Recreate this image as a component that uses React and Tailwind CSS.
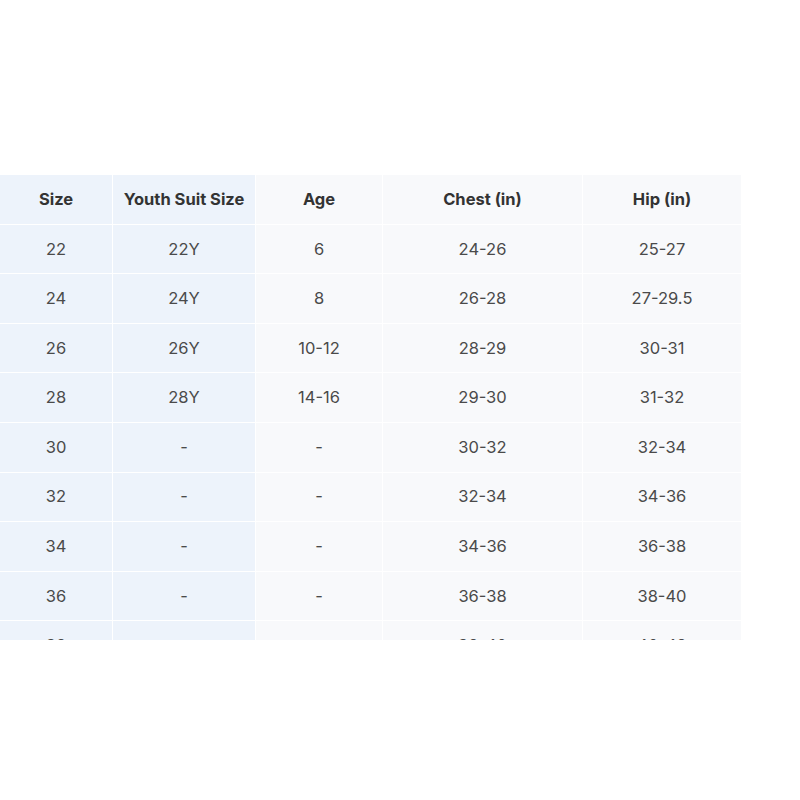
import React from "react";

const rows = [
  ["22", "22Y", "6", "24-26", "25-27"],
  ["24", "24Y", "8", "26-28", "27-29.5"],
  ["26", "26Y", "10-12", "28-29", "30-31"],
  ["28", "28Y", "14-16", "29-30", "31-32"],
  ["30", "-", "-", "30-32", "32-34"],
  ["32", "-", "-", "32-34", "34-36"],
  ["34", "-", "-", "34-36", "36-38"],
  ["36", "-", "-", "36-38", "38-40"],
  ["38", "-", "-", "38-40", "40-42"],
];

const headers = ["Size", "Youth Suit Size", "Age", "Chest (in)", "Hip (in)"];

export default function App() {
  return (
    <div className="w-[800px] h-[800px] bg-white" style={{ fontFamily: "Inter, 'Noto Sans', sans-serif" }}>
      <div className="pt-[175px]">
        <div className="w-[741px] h-[465px] overflow-hidden bg-white">
          <div className="grid grid-cols-[112px_142px_126px_199px_158px] gap-[1px] auto-rows-[48.6px]">
            {headers.map((h, i) => (
              <div
                key={h}
                className={`flex items-center justify-center text-[16.5px] font-bold text-[#333] ${i < 2 ? "bg-[#edf3fb]" : "bg-[#f8f9fb]"}`}
              >
                {h}
              </div>
            ))}
            {rows.map((r, ri) =>
              r.map((c, ci) => (
                <div
                  key={ri + "-" + ci}
                  className={`flex items-center justify-center text-[16.5px] text-[#4a4a4a] ${ci < 2 ? "bg-[#edf3fb]" : "bg-[#f8f9fb]"}`}
                >
                  {c}
                </div>
              ))
            )}
          </div>
        </div>
      </div>
    </div>
  );
}
